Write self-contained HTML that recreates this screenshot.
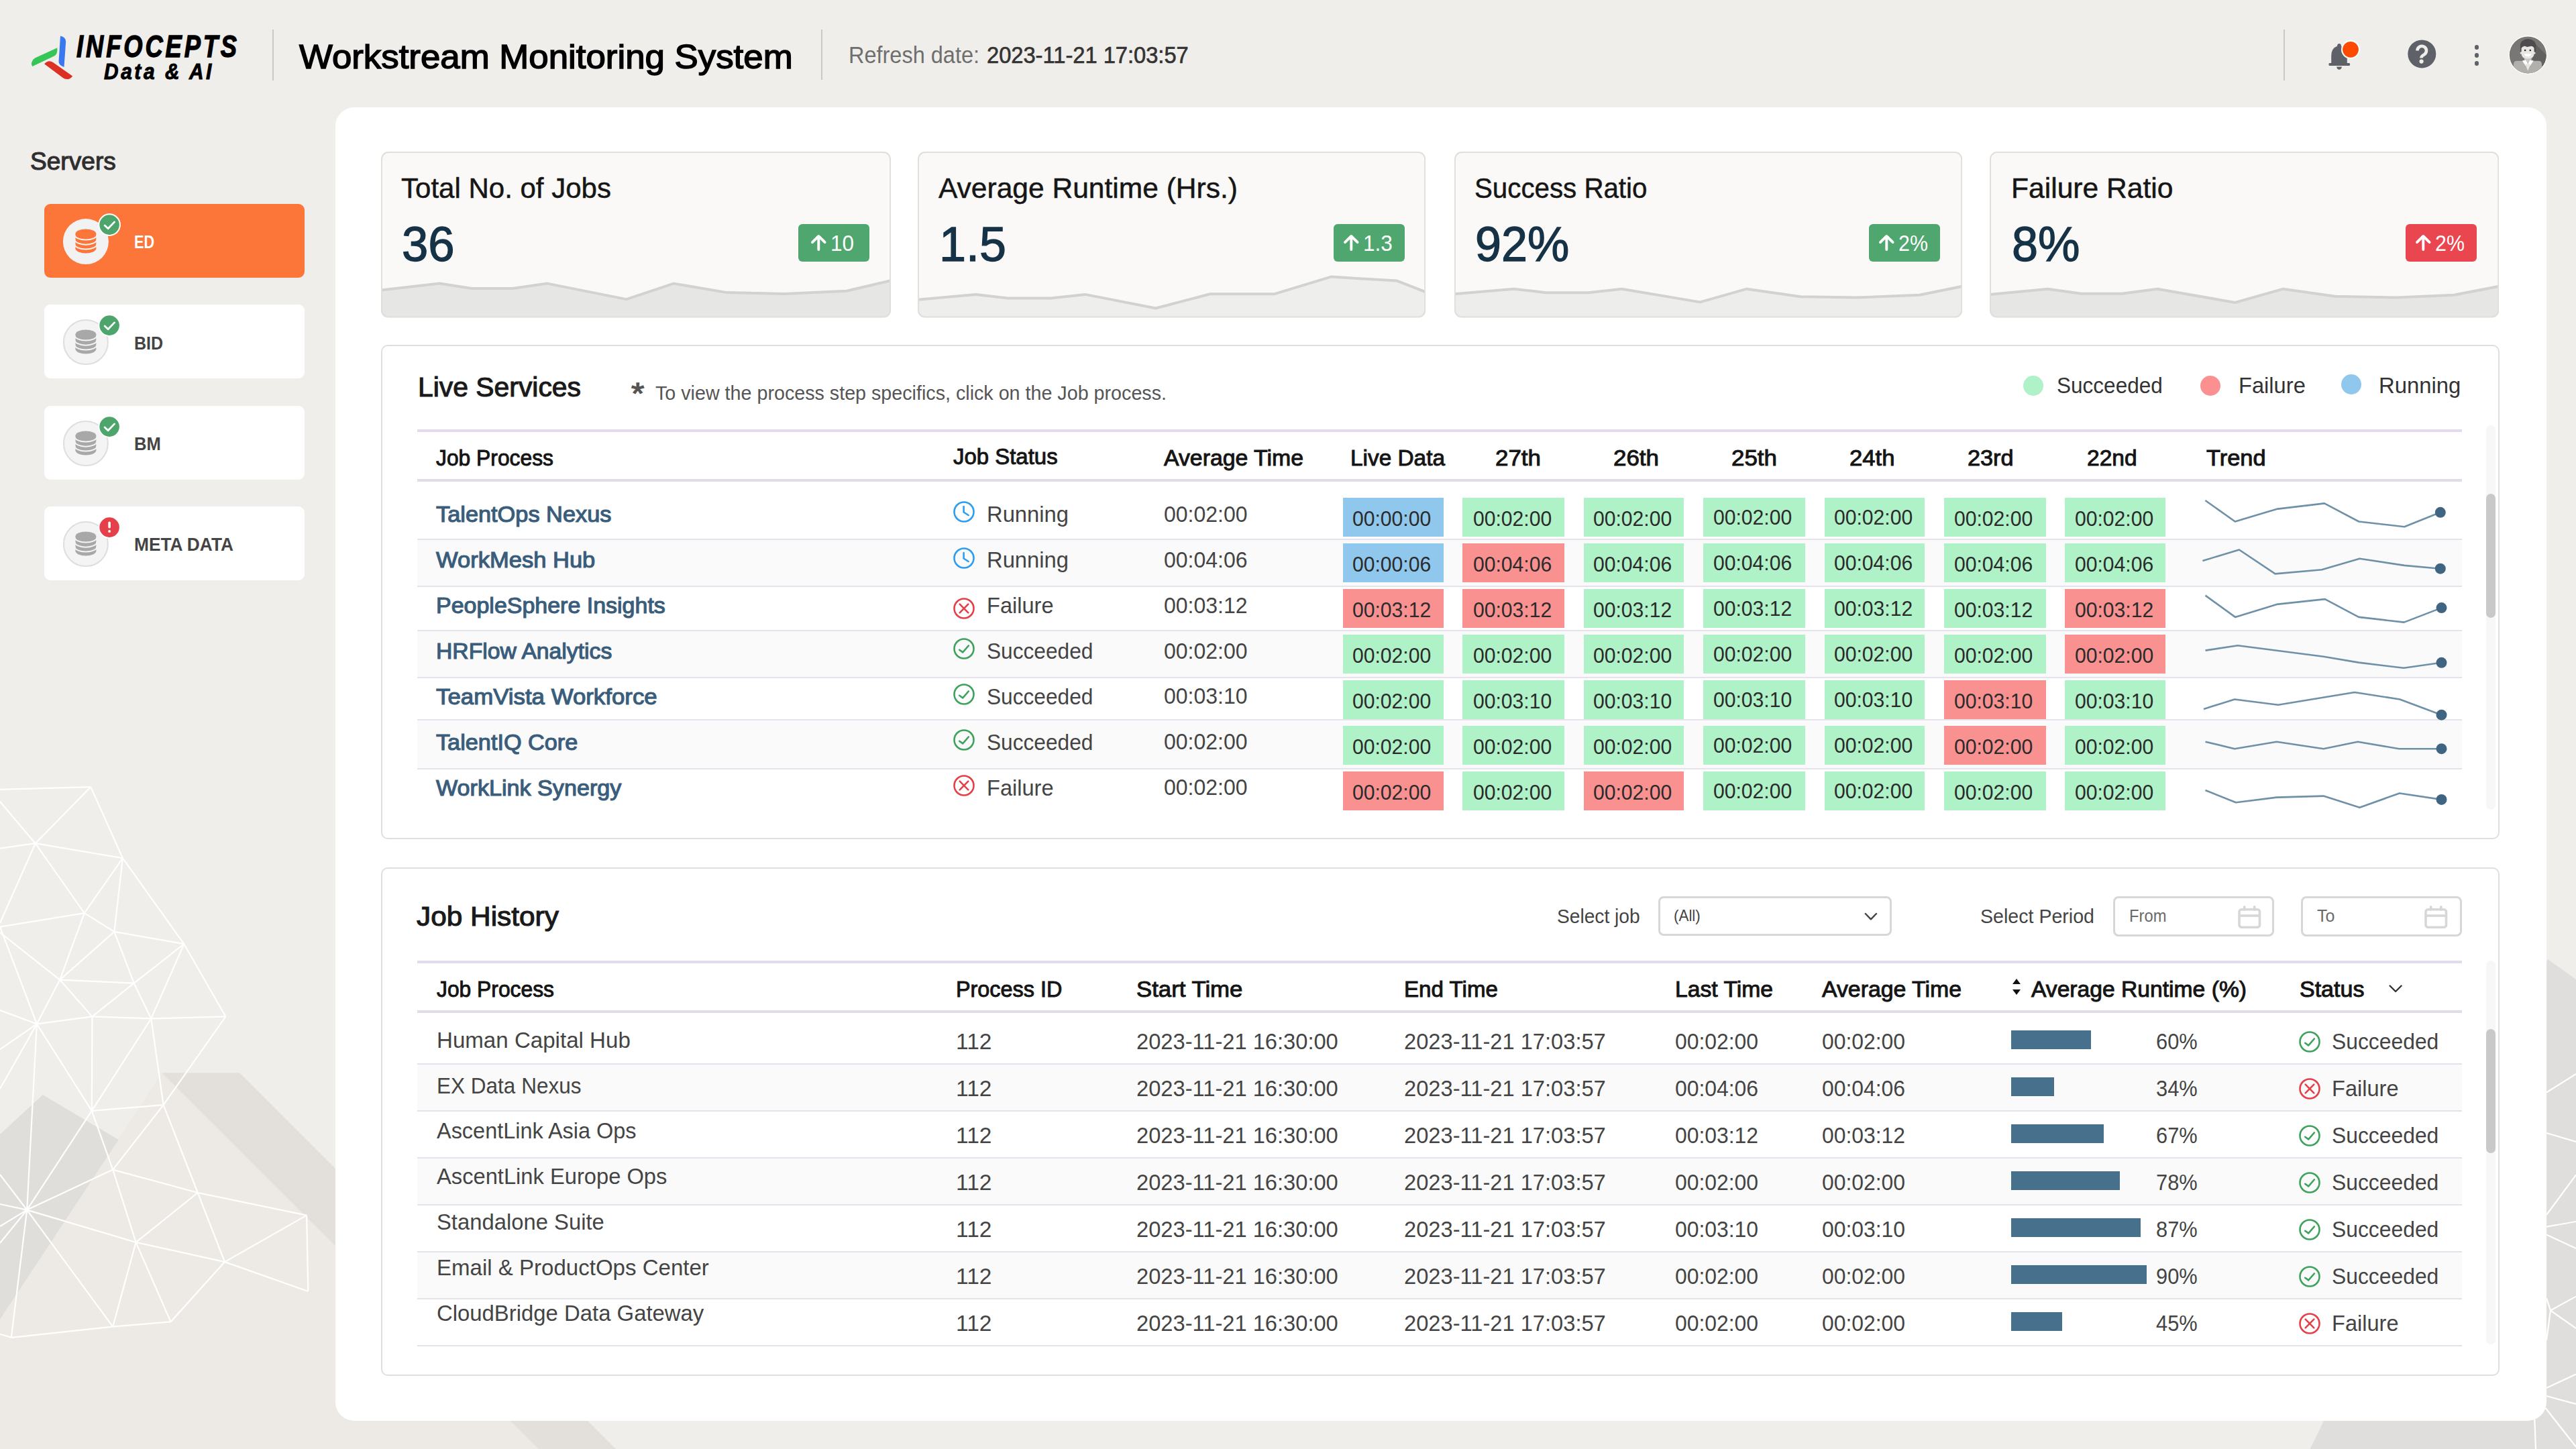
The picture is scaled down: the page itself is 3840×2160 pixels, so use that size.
<!DOCTYPE html>
<html><head><meta charset="utf-8"><title>Workstream Monitoring System</title>
<style>
html,body{margin:0;padding:0;}
body{width:3840px;height:2160px;position:relative;overflow:hidden;background:#f0eeea;font-family:"Liberation Sans", sans-serif;}
.t{position:absolute;line-height:1;white-space:nowrap;}
</style></head><body>
<svg style="position:absolute;left:0;top:0" width="3840" height="2160"><g><polygon points="241.3,1599.3 0.0,1967.0 0.0,2160.0 802.8,2160.0" fill="#edeae5"/><polygon points="241.3,1599.3 357.4,1599.3 918.0,2160.0 802.8,2160.0" fill="#e3e0dc"/><polygon points="0.0,1691.0 63.7,1632.0 176.7,1699.0 0.0,1966.7" fill="#dfdedb"/><polygon points="3798.0,1430.0 3840.0,1460.0 3840.0,2160.0 3443.6,2160.0" fill="#dfdedc"/></g><g stroke="#ffffff" stroke-width="2.2" fill="none"></g></svg>
<svg style="position:absolute;left:0;top:0" width="3840" height="2160"><g stroke="#ffffff" stroke-width="2.2" fill="none"><line x1="182.9" y1="1279.2" x2="274.3" y2="1407.2"/><line x1="125.8" y1="1361.1" x2="89.2" y2="1460.6"/><line x1="52.7" y1="1257.2" x2="0.0" y2="1376.0"/><line x1="170.4" y1="1388.9" x2="274.3" y2="1407.2"/><line x1="0.0" y1="1176.8" x2="135.3" y2="1173.1"/><line x1="0.0" y1="1195.0" x2="52.7" y2="1257.2"/><line x1="135.3" y1="1173.1" x2="52.7" y2="1257.2"/><line x1="0.0" y1="1264.6" x2="52.7" y2="1257.2"/><line x1="135.3" y1="1173.1" x2="182.9" y2="1279.2"/><line x1="52.7" y1="1257.2" x2="182.9" y2="1279.2"/><line x1="52.7" y1="1257.2" x2="125.8" y2="1361.1"/><line x1="182.9" y1="1279.2" x2="125.8" y2="1361.1"/><line x1="0.0" y1="1381.6" x2="125.8" y2="1361.1"/><line x1="0.0" y1="1390.0" x2="89.2" y2="1460.6"/><line x1="0.0" y1="1381.6" x2="54.9" y2="1526.4"/><line x1="182.9" y1="1279.2" x2="170.4" y2="1388.9"/><line x1="125.8" y1="1361.1" x2="170.4" y2="1388.9"/><line x1="170.4" y1="1388.9" x2="89.2" y2="1460.6"/><line x1="89.2" y1="1460.6" x2="199.7" y2="1465.7"/><line x1="274.3" y1="1407.2" x2="199.7" y2="1465.7"/><line x1="170.4" y1="1388.9" x2="199.7" y2="1465.7"/><line x1="199.7" y1="1465.7" x2="225.3" y2="1518.4"/><line x1="274.3" y1="1407.2" x2="225.3" y2="1518.4"/><line x1="274.3" y1="1407.2" x2="336.4" y2="1515.4"/><line x1="225.3" y1="1518.4" x2="336.4" y2="1515.4"/><line x1="89.2" y1="1460.6" x2="137.5" y2="1515.4"/><line x1="199.7" y1="1465.7" x2="137.5" y2="1515.4"/><line x1="89.2" y1="1460.6" x2="54.9" y2="1526.4"/><line x1="54.9" y1="1526.4" x2="137.5" y2="1515.4"/><line x1="137.5" y1="1515.4" x2="225.3" y2="1518.4"/><line x1="54.9" y1="1526.4" x2="136.8" y2="1655.9"/><line x1="137.5" y1="1515.4" x2="136.8" y2="1655.9"/><line x1="225.3" y1="1518.4" x2="136.8" y2="1655.9"/><line x1="225.3" y1="1518.4" x2="243.6" y2="1647.1"/><line x1="336.4" y1="1515.4" x2="243.6" y2="1647.1"/><line x1="136.8" y1="1655.9" x2="243.6" y2="1647.1"/><line x1="136.8" y1="1655.9" x2="168.2" y2="1743.6"/><line x1="243.6" y1="1647.1" x2="168.2" y2="1743.6"/><line x1="243.6" y1="1647.1" x2="294.8" y2="1778.0"/><line x1="54.9" y1="1526.4" x2="40.2" y2="1803.6"/><line x1="136.8" y1="1655.9" x2="40.2" y2="1803.6"/><line x1="168.2" y1="1743.6" x2="40.2" y2="1803.6"/><line x1="40.2" y1="1803.6" x2="202.6" y2="1851.9"/><line x1="168.2" y1="1743.6" x2="202.6" y2="1851.9"/><line x1="168.2" y1="1743.6" x2="294.8" y2="1778.0"/><line x1="294.8" y1="1778.0" x2="202.6" y2="1851.9"/><line x1="294.8" y1="1778.0" x2="335.0" y2="1881.1"/><line x1="294.8" y1="1778.0" x2="457.1" y2="1811.6"/><line x1="202.6" y1="1851.9" x2="335.0" y2="1881.1"/><line x1="457.1" y1="1811.6" x2="335.0" y2="1881.1"/><line x1="457.1" y1="1811.6" x2="459.3" y2="1925.0"/><line x1="459.3" y1="1925.0" x2="335.0" y2="1881.1"/><line x1="335.0" y1="1881.1" x2="254.5" y2="1970.4"/><line x1="202.6" y1="1851.9" x2="254.5" y2="1970.4"/><line x1="202.6" y1="1851.9" x2="168.2" y2="1977.7"/><line x1="40.2" y1="1803.6" x2="168.2" y2="1977.7"/><line x1="40.2" y1="1803.6" x2="16.8" y2="1993.8"/><line x1="168.2" y1="1977.7" x2="254.5" y2="1970.4"/><line x1="16.8" y1="1993.8" x2="168.2" y2="1977.7"/><line x1="0.0" y1="1988.7" x2="16.8" y2="1993.8"/><line x1="0.0" y1="1506.0" x2="54.9" y2="1526.4"/><line x1="0.0" y1="1564.4" x2="54.9" y2="1526.4"/><line x1="0.0" y1="1623.0" x2="54.9" y2="1526.4"/><line x1="0.0" y1="1751.0" x2="40.2" y2="1803.6"/><line x1="0.0" y1="1795.0" x2="40.2" y2="1803.6"/><line x1="0.0" y1="1828.0" x2="40.2" y2="1803.6"/><line x1="0.0" y1="1853.0" x2="40.2" y2="1803.6"/><line x1="3796.0" y1="1628.5" x2="3840.0" y2="1601.0"/><line x1="3796.0" y1="1689.0" x2="3840.0" y2="1702.0"/><line x1="3796.0" y1="1811.0" x2="3840.0" y2="1751.5"/><line x1="3796.0" y1="1828.7" x2="3840.0" y2="1821.0"/><line x1="3796.0" y1="1840.5" x2="3840.0" y2="1861.0"/><line x1="3796.0" y1="1935.0" x2="3802.0" y2="1953.5"/><line x1="3802.0" y1="1953.5" x2="3840.0" y2="1932.6"/><line x1="3802.0" y1="1953.5" x2="3840.0" y2="1980.0"/><line x1="3802.0" y1="1953.5" x2="3796.0" y2="1998.0"/><line x1="3796.0" y1="2069.0" x2="3840.0" y2="2048.5"/><line x1="3796.0" y1="2081.0" x2="3840.0" y2="2093.0"/><line x1="3794.5" y1="2098.8" x2="3840.0" y2="2156.9"/><line x1="3778.3" y1="2115.9" x2="3780.0" y2="2160.0"/></g></svg>
<svg style="position:absolute;left:40.0px;top:45.0px;" width="80.0" height="80.0" viewBox="0 0 80.0 80.0">
<path transform="translate(-40,-45)" d="M90,53.6 Q98,55.5 98.2,62 L95.5,99.9 Q88,97.5 87.5,92 Z" fill="#3a78f0"/>
<path transform="translate(-40,-45)" d="M85.3,71.2 Q86.5,80 80.9,83.6 L48.3,99.1 Q46,95 47.5,92.5 Q49,88 52.1,86.4 Z" fill="#36c657"/>
<path transform="translate(-40,-45)" d="M66,95.2 Q70,91 74,91.2 Q77.5,91.5 79.8,93.6 L108.2,113.5 Q104,118.5 100.7,117.9 Q96,118 94.1,116.2 Z" fill="#dc3024"/>
</svg>
<div id="logo1" class="t" style="left:113.6px;top:45.6px;font-size:46.5px;color:#000;font-weight:700;transform:scaleX(0.7811);transform-origin:0 0;font-style:italic;letter-spacing:5px;-webkit-text-stroke:1.40px #000;">INFOCEPTS</div>
<div id="logo2" class="t" style="left:155.0px;top:90.1px;font-size:33.0px;color:#000;font-weight:700;transform:scaleX(0.9037);transform-origin:0 0;font-style:italic;letter-spacing:4px;-webkit-text-stroke:0.99px #000;">Data &amp; AI</div>
<div style="position:absolute;left:406.0px;top:43.5px;width:2.0px;height:76.0px;background:#c9c9c7;"></div>
<div id="title" class="t" style="left:445.7px;top:59.6px;font-size:50.0px;color:#000;font-weight:400;transform:scaleX(1.0562);transform-origin:0 0;-webkit-text-stroke:1.50px #000;">Workstream Monitoring System</div>
<div style="position:absolute;left:1224.0px;top:44.0px;width:2.0px;height:75.0px;background:#c9c9c7;"></div>
<div id="refresh1" class="t" style="left:1265.4px;top:64.6px;font-size:34.9px;color:#6e6e6e;font-weight:400;transform:scaleX(0.9309);transform-origin:0 0;">Refresh date:</div>
<div id="refresh2" class="t" style="left:1471.3px;top:64.6px;font-size:34.9px;color:#333;font-weight:400;transform:scaleX(0.9356);transform-origin:0 0;-webkit-text-stroke:0.70px #333;">2023-11-21 17:03:57</div>
<div style="position:absolute;left:3404.0px;top:44.0px;width:2.0px;height:76.0px;background:#c9c9c7;"></div>
<svg style="position:absolute;left:3460.0px;top:55.0px;" width="60.0" height="60.0" viewBox="0 0 60.0 60.0">
<g transform="translate(-3460,-55)" fill="#5f6169">
<path d="M3487,65 Q3490,65 3490,68.8 Q3498.8,72 3498.8,83 L3498.8,94 L3501.8,94 Q3503.2,94 3503.2,96 Q3503.2,98 3501.8,98 L3472.8,98 Q3471.4,98 3471.4,96 Q3471.4,94 3472.8,94 L3475.2,94 L3475.2,83 Q3475.2,72 3484,68.8 Q3484,65 3487,65 Z"/>
<path d="M3483,99.5 L3491,99.5 Q3490,103.8 3487,103.8 Q3484,103.8 3483,99.5 Z"/>
</g>
<circle cx="44" cy="18.8" r="14" fill="#ffffff"/>
<circle cx="44" cy="18.8" r="11.9" fill="#fe4a00"/>
</svg>
<svg style="position:absolute;left:3585.0px;top:55.0px;" width="50.0" height="50.0" viewBox="0 0 50.0 50.0">
<circle cx="25.3" cy="25.4" r="21" fill="#5f6169"/>
<path d="M18.5,20.6 A6.75,6.75 0 1 1 29.2,26 Q24.4,28.6 24.4,31.4" stroke="#f0eeea" stroke-width="4.6" fill="none" stroke-linecap="butt"/>
<circle cx="24.6" cy="36.6" r="3.1" fill="#f0eeea"/>
</svg>
<div style="position:absolute;left:3688.6px;top:66.9px;width:6.8px;height:6.8px;background:#5f6169;border-radius:50%;"></div>
<div style="position:absolute;left:3688.6px;top:79.0px;width:6.8px;height:6.8px;background:#5f6169;border-radius:50%;"></div>
<div style="position:absolute;left:3688.6px;top:91.1px;width:6.8px;height:6.8px;background:#5f6169;border-radius:50%;"></div>
<svg style="position:absolute;left:3738.0px;top:52.0px;" width="62.0" height="62.0" viewBox="0 0 62.0 62.0">
<defs><clipPath id="avc"><circle cx="30.3" cy="29.9" r="27.5"/></clipPath></defs>
<circle cx="30.3" cy="29.9" r="28.8" fill="#ffffff"/>
<g clip-path="url(#avc)">
<rect x="0" y="0" width="62" height="62" fill="#787775"/>
<path d="M37,9 L62,34 L62,62 L37,62 Z" fill="#62615f"/>
<path d="M9,62 L9,44 Q9,38.8 14,38.8 L46,38.8 Q51,38.8 51,44 L51,62 Z" fill="#b1b0ad"/>
<rect x="25" y="34" width="10.5" height="7" fill="#c8c7c5"/>
<path d="M21.9,38.4 L27.2,37.4 L30.3,43.2 L26.8,46 Z M38.7,38.4 L33.4,37.4 L30.3,43.2 L33.8,46 Z" fill="#ffffff"/>
<path d="M26.4,43.5 L34.2,43.5 L30.2,53.8 Z" fill="#e8e6e3"/>
<ellipse cx="30.5" cy="15.8" rx="11.6" ry="9.8" fill="#4d4d4d"/>
<rect x="18.9" y="15" width="4" height="10" fill="#4d4d4d"/><rect x="38.2" y="15" width="4" height="10" fill="#4d4d4d"/>
<path d="M20.6,20 Q22,17 26,16.8 L29,18 L35.5,16.8 Q39.2,17.5 39.6,20.5 L39.6,28 Q39.6,35.5 30.1,35.5 Q20.6,35.5 20.6,28 Z" fill="#e8e6e3"/>
<circle cx="20.2" cy="27" r="1.6" fill="#e8e6e3"/><circle cx="40" cy="27" r="1.6" fill="#e8e6e3"/>
<circle cx="26.1" cy="23" r="1.3" fill="#222"/><circle cx="33.8" cy="23" r="1.3" fill="#222"/>
<path d="M24.8,28.3 L35.2,28.3 Q34.5,32.3 30,32.3 Q25.5,32.3 24.8,28.3 Z" fill="#ffffff"/>
</g>
</svg>
<div id="servers" class="t" style="left:44.7px;top:222.2px;font-size:37.5px;color:#2f2f2f;font-weight:400;transform:scaleX(0.9891);transform-origin:0 0;-webkit-text-stroke:1.12px #2f2f2f;">Servers</div>
<div style="position:absolute;left:66.0px;top:303.7px;width:388.0px;height:110.0px;background:#fc763a;border-radius:9px;"></div>
<svg style="position:absolute;left:66.0px;top:303.7px;" width="150.0" height="110.0" viewBox="0 0 150.0 110.0"><circle cx="61.9" cy="56.1" r="34" fill="#f2f2f3"/><ellipse cx="61.9" cy="66.3" rx="15.4" ry="7.2" fill="#fc763a"/><rect x="46.5" y="44.6" width="30.8" height="21.7" fill="#fc763a"/><path d="M45.5,45.9 A16.4,7.6 0 0 0 78.3,45.9" stroke="#f2f2f3" stroke-width="1.9" fill="none"/><path d="M45.5,53.1 A16.4,7.6 0 0 0 78.3,53.1" stroke="#f2f2f3" stroke-width="1.9" fill="none"/><path d="M45.5,59.9 A16.4,7.6 0 0 0 78.3,59.9" stroke="#f2f2f3" stroke-width="1.9" fill="none"/><ellipse cx="61.9" cy="44.6" rx="15.4" ry="7.2" fill="#fc763a"/><circle cx="97.1" cy="31.1" r="16.8" fill="#ffffff"/><circle cx="97.1" cy="31.1" r="14.8" fill="#4ea56c"/><path d="M90.1,31.9 L95.1,36.7 L104.6,26.9" stroke="#fff" stroke-width="2.8" fill="none" stroke-linecap="round" stroke-linejoin="round"/></svg>
<div id="srv_ED" class="t" style="left:199.5px;top:348.3px;font-size:27.0px;color:#ffffff;font-weight:700;transform:scaleX(0.8050);transform-origin:0 0;">ED</div>
<div style="position:absolute;left:66.0px;top:454.4px;width:388.0px;height:110.0px;background:#ffffff;border-radius:9px;"></div>
<svg style="position:absolute;left:66.0px;top:454.4px;" width="150.0" height="110.0" viewBox="0 0 150.0 110.0"><circle cx="61.9" cy="56.1" r="33" fill="#f4f4f4" stroke="#dedede" stroke-width="2"/><ellipse cx="61.9" cy="66.3" rx="15.4" ry="7.2" fill="#a8a8a8"/><rect x="46.5" y="44.6" width="30.8" height="21.7" fill="#a8a8a8"/><path d="M45.5,45.9 A16.4,7.6 0 0 0 78.3,45.9" stroke="#f4f4f4" stroke-width="1.9" fill="none"/><path d="M45.5,53.1 A16.4,7.6 0 0 0 78.3,53.1" stroke="#f4f4f4" stroke-width="1.9" fill="none"/><path d="M45.5,59.9 A16.4,7.6 0 0 0 78.3,59.9" stroke="#f4f4f4" stroke-width="1.9" fill="none"/><ellipse cx="61.9" cy="44.6" rx="15.4" ry="7.2" fill="#a8a8a8"/><circle cx="97.1" cy="31.1" r="16.8" fill="#ffffff"/><circle cx="97.1" cy="31.1" r="14.8" fill="#4ea56c"/><path d="M90.1,31.9 L95.1,36.7 L104.6,26.9" stroke="#fff" stroke-width="2.8" fill="none" stroke-linecap="round" stroke-linejoin="round"/></svg>
<div id="srv_BID" class="t" style="left:199.5px;top:499.0px;font-size:27.0px;color:#444;font-weight:700;transform:scaleX(0.9290);transform-origin:0 0;">BID</div>
<div style="position:absolute;left:66.0px;top:604.5px;width:388.0px;height:110.0px;background:#ffffff;border-radius:9px;"></div>
<svg style="position:absolute;left:66.0px;top:604.5px;" width="150.0" height="110.0" viewBox="0 0 150.0 110.0"><circle cx="61.9" cy="56.1" r="33" fill="#f4f4f4" stroke="#dedede" stroke-width="2"/><ellipse cx="61.9" cy="66.3" rx="15.4" ry="7.2" fill="#a8a8a8"/><rect x="46.5" y="44.6" width="30.8" height="21.7" fill="#a8a8a8"/><path d="M45.5,45.9 A16.4,7.6 0 0 0 78.3,45.9" stroke="#f4f4f4" stroke-width="1.9" fill="none"/><path d="M45.5,53.1 A16.4,7.6 0 0 0 78.3,53.1" stroke="#f4f4f4" stroke-width="1.9" fill="none"/><path d="M45.5,59.9 A16.4,7.6 0 0 0 78.3,59.9" stroke="#f4f4f4" stroke-width="1.9" fill="none"/><ellipse cx="61.9" cy="44.6" rx="15.4" ry="7.2" fill="#a8a8a8"/><circle cx="97.1" cy="31.1" r="16.8" fill="#ffffff"/><circle cx="97.1" cy="31.1" r="14.8" fill="#4ea56c"/><path d="M90.1,31.9 L95.1,36.7 L104.6,26.9" stroke="#fff" stroke-width="2.8" fill="none" stroke-linecap="round" stroke-linejoin="round"/></svg>
<div id="srv_BM" class="t" style="left:199.5px;top:649.1px;font-size:27.0px;color:#444;font-weight:700;transform:scaleX(0.9476);transform-origin:0 0;">BM</div>
<div style="position:absolute;left:66.0px;top:754.7px;width:388.0px;height:110.0px;background:#ffffff;border-radius:9px;"></div>
<svg style="position:absolute;left:66.0px;top:754.7px;" width="150.0" height="110.0" viewBox="0 0 150.0 110.0"><circle cx="61.9" cy="56.1" r="33" fill="#f4f4f4" stroke="#dedede" stroke-width="2"/><ellipse cx="61.9" cy="66.3" rx="15.4" ry="7.2" fill="#a8a8a8"/><rect x="46.5" y="44.6" width="30.8" height="21.7" fill="#a8a8a8"/><path d="M45.5,45.9 A16.4,7.6 0 0 0 78.3,45.9" stroke="#f4f4f4" stroke-width="1.9" fill="none"/><path d="M45.5,53.1 A16.4,7.6 0 0 0 78.3,53.1" stroke="#f4f4f4" stroke-width="1.9" fill="none"/><path d="M45.5,59.9 A16.4,7.6 0 0 0 78.3,59.9" stroke="#f4f4f4" stroke-width="1.9" fill="none"/><ellipse cx="61.9" cy="44.6" rx="15.4" ry="7.2" fill="#a8a8a8"/><circle cx="97.1" cy="31.1" r="16.8" fill="#ffffff"/><circle cx="97.1" cy="31.1" r="14.8" fill="#e5404a"/><rect x="95.3" y="22.6" width="3.6" height="10" rx="1.8" fill="#fff"/><circle cx="97.1" cy="37.1" r="2" fill="#fff"/></svg>
<div id="srv_META_DATA" class="t" style="left:199.5px;top:799.3px;font-size:27.0px;color:#444;font-weight:700;transform:scaleX(0.9739);transform-origin:0 0;">META DATA</div>
<div style="position:absolute;left:500.4px;top:159.6px;width:3295.5px;height:1958.3px;background:#ffffff;border-radius:28px;"></div>
<svg style="position:absolute;left:567.8px;top:226.3px;" width="760.0" height="247.5" viewBox="0 0 760.0 247.5"><defs><clipPath id="kc0"><rect x="0" y="0" width="760.0" height="247.5" rx="10"/></clipPath></defs><rect x="1" y="1" width="758.0" height="245.5" rx="10" fill="#faf9f7"/><g clip-path="url(#kc0)"><polygon points="0.0,206.6 87.2,196.6 135.2,204.1 196.2,204.1 247.9,196.6 365.8,220.1 436.2,196.6 515.8,210.1 601.2,211.9 694.2,207.7 760.0,192.3 760.0,247.5 0.0,247.5" fill="#e6e6e5"/><polyline points="0.0,206.6 87.2,196.6 135.2,204.1 196.2,204.1 247.9,196.6 365.8,220.1 436.2,196.6 515.8,210.1 601.2,211.9 694.2,207.7 760.0,192.3" fill="none" stroke="#d2d2d1" stroke-width="4" stroke-linejoin="round"/></g><rect x="1" y="1" width="758.0" height="245.5" rx="10" fill="none" stroke="#e2dfdb" stroke-width="2"/></svg>
<div id="kt0" class="t" style="left:598.3px;top:260.4px;font-size:42.4px;color:#161616;font-weight:400;transform:scaleX(0.9913);transform-origin:0 0;-webkit-text-stroke:0.51px #161616;">Total No. of Jobs</div>
<div id="kv0" class="t" style="left:598.8px;top:328.0px;font-size:72.8px;color:#163246;font-weight:400;transform:scaleX(0.9706);transform-origin:0 0;-webkit-text-stroke:1.31px #163246;">36</div>
<div style="position:absolute;left:1190.0px;top:334.2px;width:105.7px;height:55.5px;background:#4fa66f;border-radius:6px;"></div>
<svg style="position:absolute;left:1208.0px;top:348.0px;" width="26.0" height="30.0" viewBox="0 0 26.0 30.0"><path d="M12.3,24 L12.3,4.2 M3,13.2 L12.3,4 L21.6,13.2" stroke="#fff" stroke-width="3.9" fill="none" stroke-linecap="round" stroke-linejoin="round"/></svg>
<div id="kb0" class="t" style="left:1238.0px;top:345.6px;font-size:33.4px;color:#ffffff;font-weight:400;transform:scaleX(0.9424);transform-origin:0 0;">10</div>
<svg style="position:absolute;left:1367.7px;top:226.3px;" width="757.2" height="247.5" viewBox="0 0 757.2 247.5"><defs><clipPath id="kc1"><rect x="0" y="0" width="757.2" height="247.5" rx="10"/></clipPath></defs><rect x="1" y="1" width="755.2" height="245.5" rx="10" fill="#faf9f7"/><g clip-path="url(#kc1)"><polygon points="0.0,220.7 86.2,212.9 134.6,218.4 198.2,218.4 249.7,212.9 354.8,233.5 435.9,212.3 531.3,212.3 616.1,186.6 714.5,192.6 757.2,209.3 757.2,247.5 0.0,247.5" fill="#eeeeed"/><polyline points="0.0,220.7 86.2,212.9 134.6,218.4 198.2,218.4 249.7,212.9 354.8,233.5 435.9,212.3 531.3,212.3 616.1,186.6 714.5,192.6 757.2,209.3" fill="none" stroke="#d2d2d1" stroke-width="4" stroke-linejoin="round"/></g><rect x="1" y="1" width="755.2" height="245.5" rx="10" fill="none" stroke="#e2dfdb" stroke-width="2"/></svg>
<div id="kt1" class="t" style="left:1399.2px;top:260.4px;font-size:42.4px;color:#161616;font-weight:400;transform:scaleX(1.0034);transform-origin:0 0;-webkit-text-stroke:0.51px #161616;">Average Runtime (Hrs.)</div>
<div id="kv1" class="t" style="left:1399.7px;top:328.0px;font-size:72.8px;color:#163246;font-weight:400;transform:scaleX(0.9881);transform-origin:0 0;-webkit-text-stroke:1.31px #163246;">1.5</div>
<div style="position:absolute;left:1988.3px;top:334.2px;width:105.7px;height:55.5px;background:#4fa66f;border-radius:6px;"></div>
<svg style="position:absolute;left:2001.8px;top:348.0px;" width="26.0" height="30.0" viewBox="0 0 26.0 30.0"><path d="M12.3,24 L12.3,4.2 M3,13.2 L12.3,4 L21.6,13.2" stroke="#fff" stroke-width="3.9" fill="none" stroke-linecap="round" stroke-linejoin="round"/></svg>
<div id="kb1" class="t" style="left:2031.8px;top:345.6px;font-size:33.4px;color:#ffffff;font-weight:400;transform:scaleX(0.9457);transform-origin:0 0;">1.3</div>
<svg style="position:absolute;left:2167.7px;top:226.3px;" width="757.2" height="247.5" viewBox="0 0 757.2 247.5"><defs><clipPath id="kc2"><rect x="0" y="0" width="757.2" height="247.5" rx="10"/></clipPath></defs><rect x="1" y="1" width="755.2" height="245.5" rx="10" fill="#faf9f7"/><g clip-path="url(#kc2)"><polygon points="0.0,212.3 88.6,204.7 136.1,210.2 199.7,210.2 249.7,204.7 366.3,224.4 435.9,204.7 516.1,216.3 600.9,217.5 693.3,213.8 757.2,200.8 757.2,247.5 0.0,247.5" fill="#ededec"/><polyline points="0.0,212.3 88.6,204.7 136.1,210.2 199.7,210.2 249.7,204.7 366.3,224.4 435.9,204.7 516.1,216.3 600.9,217.5 693.3,213.8 757.2,200.8" fill="none" stroke="#d2d2d1" stroke-width="4" stroke-linejoin="round"/></g><rect x="1" y="1" width="755.2" height="245.5" rx="10" fill="none" stroke="#e2dfdb" stroke-width="2"/></svg>
<div id="kt2" class="t" style="left:2198.2px;top:260.4px;font-size:42.4px;color:#161616;font-weight:400;transform:scaleX(0.9500);transform-origin:0 0;-webkit-text-stroke:0.51px #161616;">Success Ratio</div>
<div id="kv2" class="t" style="left:2198.7px;top:328.0px;font-size:72.8px;color:#163246;font-weight:400;transform:scaleX(0.9622);transform-origin:0 0;-webkit-text-stroke:1.31px #163246;">92%</div>
<div style="position:absolute;left:2786.2px;top:334.2px;width:105.7px;height:55.5px;background:#4fa66f;border-radius:6px;"></div>
<svg style="position:absolute;left:2799.8px;top:348.0px;" width="26.0" height="30.0" viewBox="0 0 26.0 30.0"><path d="M12.3,24 L12.3,4.2 M3,13.2 L12.3,4 L21.6,13.2" stroke="#fff" stroke-width="3.9" fill="none" stroke-linecap="round" stroke-linejoin="round"/></svg>
<div id="kb2" class="t" style="left:2829.8px;top:345.6px;font-size:33.4px;color:#ffffff;font-weight:400;transform:scaleX(0.9096);transform-origin:0 0;">2%</div>
<svg style="position:absolute;left:2965.9px;top:226.3px;" width="759.3" height="247.5" viewBox="0 0 759.3 247.5"><defs><clipPath id="kc3"><rect x="0" y="0" width="759.3" height="247.5" rx="10"/></clipPath></defs><rect x="1" y="1" width="757.3" height="245.5" rx="10" fill="#faf9f7"/><g clip-path="url(#kc3)"><polygon points="0.0,212.9 86.5,204.7 136.4,211.7 197.0,211.7 250.0,204.7 365.9,225.0 437.7,204.7 514.9,215.7 607.3,217.5 692.0,213.8 759.3,200.8 759.3,247.5 0.0,247.5" fill="#e6e6e5"/><polyline points="0.0,212.9 86.5,204.7 136.4,211.7 197.0,211.7 250.0,204.7 365.9,225.0 437.7,204.7 514.9,215.7 607.3,217.5 692.0,213.8 759.3,200.8" fill="none" stroke="#d2d2d1" stroke-width="4" stroke-linejoin="round"/></g><rect x="1" y="1" width="757.3" height="245.5" rx="10" fill="none" stroke="#e2dfdb" stroke-width="2"/></svg>
<div id="kt3" class="t" style="left:2998.4px;top:260.4px;font-size:42.4px;color:#161616;font-weight:400;transform:scaleX(1.0049);transform-origin:0 0;-webkit-text-stroke:0.51px #161616;">Failure Ratio</div>
<div id="kv3" class="t" style="left:2998.9px;top:328.0px;font-size:72.8px;color:#163246;font-weight:400;transform:scaleX(0.9647);transform-origin:0 0;-webkit-text-stroke:1.31px #163246;">8%</div>
<div style="position:absolute;left:3586.2px;top:334.2px;width:105.7px;height:55.5px;background:#e9464f;border-radius:6px;"></div>
<svg style="position:absolute;left:3599.8px;top:348.0px;" width="26.0" height="30.0" viewBox="0 0 26.0 30.0"><path d="M12.3,24 L12.3,4.2 M3,13.2 L12.3,4 L21.6,13.2" stroke="#fff" stroke-width="3.9" fill="none" stroke-linecap="round" stroke-linejoin="round"/></svg>
<div id="kb3" class="t" style="left:3629.8px;top:345.6px;font-size:33.4px;color:#ffffff;font-weight:400;transform:scaleX(0.9096);transform-origin:0 0;">2%</div>
<div style="position:absolute;left:568.2px;top:513.9px;width:3158.0px;height:737.1px;background:#ffffff;box-sizing:border-box;border:2px solid #e2dfdb;border-radius:10px;"></div>
<div id="ls_title" class="t" style="left:623.2px;top:558.2px;font-size:39.8px;color:#1a1a1a;font-weight:400;transform:scaleX(1.0267);transform-origin:0 0;-webkit-text-stroke:1.11px #1a1a1a;">Live Services</div>
<div id="ls_ast" class="t" style="left:941.0px;top:564.7px;font-size:44.0px;color:#555;font-weight:400;transform:scaleX(1.1328);transform-origin:0 0;-webkit-text-stroke:1.32px #555;">*</div>
<div id="ls_note" class="t" style="left:976.8px;top:571.6px;font-size:29.0px;color:#555;font-weight:400;transform:scaleX(0.9890);transform-origin:0 0;">To view the process step specifics, click on the Job process.</div>
<div style="position:absolute;left:3016.0px;top:560.2px;width:30.0px;height:30.0px;background:#b0f2c8;border-radius:50%;"></div>
<div id="lg_Succeeded" class="t" style="left:3066.0px;top:557.1px;font-size:34.0px;color:#333;font-weight:400;transform:scaleX(0.9275);transform-origin:0 0;">Succeeded</div>
<div style="position:absolute;left:3279.7px;top:560.2px;width:30.0px;height:30.0px;background:#fa9090;border-radius:50%;"></div>
<div id="lg_Failure" class="t" style="left:3336.5px;top:557.1px;font-size:34.0px;color:#333;font-weight:400;transform:scaleX(0.9602);transform-origin:0 0;">Failure</div>
<div style="position:absolute;left:3489.6px;top:558.2px;width:30.0px;height:30.0px;background:#8fc8ec;border-radius:50%;"></div>
<div id="lg_Running" class="t" style="left:3546.0px;top:557.1px;font-size:34.0px;color:#333;font-weight:400;transform:scaleX(0.9664);transform-origin:0 0;">Running</div>
<div style="position:absolute;left:621.7px;top:639.8px;width:3048.0px;height:3.9px;background:#e2dcea;"></div>
<div style="position:absolute;left:621.7px;top:713.8px;width:3048.0px;height:4.0px;background:#e2dcea;"></div>
<div id="lsh0" class="t" style="left:650.0px;top:665.9px;font-size:33.5px;color:#151515;font-weight:400;transform:scaleX(0.9493);transform-origin:0 0;-webkit-text-stroke:1.00px #151515;">Job Process</div>
<div id="lsh1" class="t" style="left:1421.4px;top:663.9px;font-size:33.5px;color:#151515;font-weight:400;transform:scaleX(0.9830);transform-origin:0 0;-webkit-text-stroke:1.00px #151515;">Job Status</div>
<div id="lsh2" class="t" style="left:1734.9px;top:665.9px;font-size:33.5px;color:#151515;font-weight:400;transform:scaleX(1.0093);transform-origin:0 0;-webkit-text-stroke:1.00px #151515;">Average Time</div>
<div id="lsh3" class="t" style="left:2012.9px;top:665.9px;font-size:33.5px;color:#151515;font-weight:400;transform:scaleX(0.9962);transform-origin:0 0;-webkit-text-stroke:1.00px #151515;">Live Data</div>
<div id="lsh4" class="t" style="left:2228.7px;top:665.9px;font-size:33.5px;color:#151515;font-weight:400;transform:scaleX(1.0429);transform-origin:0 0;-webkit-text-stroke:1.00px #151515;">27th</div>
<div id="lsh5" class="t" style="left:2404.6px;top:665.9px;font-size:33.5px;color:#151515;font-weight:400;transform:scaleX(1.0429);transform-origin:0 0;-webkit-text-stroke:1.00px #151515;">26th</div>
<div id="lsh6" class="t" style="left:2580.5px;top:665.9px;font-size:33.5px;color:#151515;font-weight:400;transform:scaleX(1.0429);transform-origin:0 0;-webkit-text-stroke:1.00px #151515;">25th</div>
<div id="lsh7" class="t" style="left:2756.5px;top:665.9px;font-size:33.5px;color:#151515;font-weight:400;transform:scaleX(1.0352);transform-origin:0 0;-webkit-text-stroke:1.00px #151515;">24th</div>
<div id="lsh8" class="t" style="left:2933.4px;top:665.9px;font-size:33.5px;color:#151515;font-weight:400;transform:scaleX(1.0229);transform-origin:0 0;-webkit-text-stroke:1.00px #151515;">23rd</div>
<div id="lsh9" class="t" style="left:3111.0px;top:665.9px;font-size:33.5px;color:#151515;font-weight:400;transform:scaleX(1.0023);transform-origin:0 0;-webkit-text-stroke:1.00px #151515;">22nd</div>
<div id="lsh10" class="t" style="left:3289.4px;top:665.9px;font-size:33.5px;color:#151515;font-weight:400;transform:scaleX(1.0269);transform-origin:0 0;-webkit-text-stroke:1.00px #151515;">Trend</div>
<div style="position:absolute;left:621.7px;top:804.5px;width:3048.0px;height:69.0px;background:#fafafa;"></div>
<div style="position:absolute;left:621.7px;top:941.0px;width:3048.0px;height:69.0px;background:#fafafa;"></div>
<div style="position:absolute;left:621.7px;top:1074.4px;width:3048.0px;height:71.4px;background:#fafafa;"></div>
<div style="position:absolute;left:621.7px;top:802.5px;width:3048.0px;height:2.0px;background:#e6e2ec;"></div>
<div style="position:absolute;left:621.7px;top:872.5px;width:3048.0px;height:2.0px;background:#e6e2ec;"></div>
<div style="position:absolute;left:621.7px;top:939.0px;width:3048.0px;height:2.0px;background:#e6e2ec;"></div>
<div style="position:absolute;left:621.7px;top:1009.0px;width:3048.0px;height:2.0px;background:#e6e2ec;"></div>
<div style="position:absolute;left:621.7px;top:1072.4px;width:3048.0px;height:2.0px;background:#e6e2ec;"></div>
<div style="position:absolute;left:621.7px;top:1144.8px;width:3048.0px;height:2.0px;background:#e6e2ec;"></div>
<div id="lsn0" class="t" style="left:650.4px;top:749.8px;font-size:33.9px;color:#3a5d7b;font-weight:400;transform:scaleX(1.0129);transform-origin:0 0;-webkit-text-stroke:1.19px #3a5d7b;">TalentOps Nexus</div>
<svg style="position:absolute;left:1418.9px;top:744.8px;" width="36.0" height="36.0" viewBox="0 0 36.0 36.0"><circle cx="18" cy="18" r="14.5" fill="none" stroke="#2e9df0" stroke-width="2.6"/><path d="M17.6,10 L17.6,18.5 L24.6,23" stroke="#2e9df0" stroke-width="2.6" fill="none" stroke-linecap="round" stroke-linejoin="round"/></svg>
<div id="lss0" class="t" style="left:1470.8px;top:750.1px;font-size:33.5px;color:#444;font-weight:400;transform:scaleX(0.9776);transform-origin:0 0;">Running</div>
<div id="lsa0" class="t" style="left:1734.9px;top:749.6px;font-size:33.5px;color:#444;font-weight:400;transform:scaleX(0.9547);transform-origin:0 0;">00:02:00</div>
<div style="position:absolute;left:2002.0px;top:742.2px;width:149.7px;height:57.6px;background:#8fc8ec;"></div>
<div id="lsc0_0" class="t" style="left:2016.3px;top:757.2px;font-size:32.2px;color:#2b2b2b;font-weight:400;transform:scaleX(0.9354);transform-origin:0 0;">00:00:00</div>
<div style="position:absolute;left:2180.2px;top:742.2px;width:152.0px;height:57.6px;background:#aff2c7;"></div>
<div id="lsc0_1" class="t" style="left:2195.7px;top:757.2px;font-size:32.2px;color:#2b2b2b;font-weight:400;transform:scaleX(0.9354);transform-origin:0 0;">00:02:00</div>
<div style="position:absolute;left:2360.5px;top:742.2px;width:149.7px;height:57.6px;background:#aff2c7;"></div>
<div id="lsc0_2" class="t" style="left:2374.8px;top:757.2px;font-size:32.2px;color:#2b2b2b;font-weight:400;transform:scaleX(0.9354);transform-origin:0 0;">00:02:00</div>
<div style="position:absolute;left:2539.2px;top:742.2px;width:151.5px;height:57.6px;background:#aff2c7;"></div>
<div id="lsc0_3" class="t" style="left:2554.4px;top:755.0px;font-size:32.2px;color:#2b2b2b;font-weight:400;transform:scaleX(0.9354);transform-origin:0 0;">00:02:00</div>
<div style="position:absolute;left:2719.5px;top:742.2px;width:149.7px;height:57.6px;background:#aff2c7;"></div>
<div id="lsc0_4" class="t" style="left:2733.8px;top:755.0px;font-size:32.2px;color:#2b2b2b;font-weight:400;transform:scaleX(0.9354);transform-origin:0 0;">00:02:00</div>
<div style="position:absolute;left:2898.0px;top:742.2px;width:151.7px;height:57.6px;background:#aff2c7;"></div>
<div id="lsc0_5" class="t" style="left:2913.3px;top:757.2px;font-size:32.2px;color:#2b2b2b;font-weight:400;transform:scaleX(0.9354);transform-origin:0 0;">00:02:00</div>
<div style="position:absolute;left:3078.2px;top:742.2px;width:150.0px;height:57.6px;background:#aff2c7;"></div>
<div id="lsc0_6" class="t" style="left:3092.7px;top:757.2px;font-size:32.2px;color:#2b2b2b;font-weight:400;transform:scaleX(0.9354);transform-origin:0 0;">00:02:00</div>
<div id="lsn1" class="t" style="left:650.4px;top:817.7px;font-size:33.9px;color:#3a5d7b;font-weight:400;transform:scaleX(1.0188);transform-origin:0 0;-webkit-text-stroke:1.19px #3a5d7b;">WorkMesh Hub</div>
<svg style="position:absolute;left:1418.9px;top:813.6px;" width="36.0" height="36.0" viewBox="0 0 36.0 36.0"><circle cx="18" cy="18" r="14.5" fill="none" stroke="#2e9df0" stroke-width="2.6"/><path d="M17.6,10 L17.6,18.5 L24.6,23" stroke="#2e9df0" stroke-width="2.6" fill="none" stroke-linecap="round" stroke-linejoin="round"/></svg>
<div id="lss1" class="t" style="left:1470.8px;top:818.1px;font-size:33.5px;color:#444;font-weight:400;transform:scaleX(0.9776);transform-origin:0 0;">Running</div>
<div id="lsa1" class="t" style="left:1734.9px;top:817.6px;font-size:33.5px;color:#444;font-weight:400;transform:scaleX(0.9547);transform-origin:0 0;">00:04:06</div>
<div style="position:absolute;left:2002.0px;top:810.2px;width:149.7px;height:57.6px;background:#8fc8ec;"></div>
<div id="lsc1_0" class="t" style="left:2016.3px;top:825.2px;font-size:32.2px;color:#2b2b2b;font-weight:400;transform:scaleX(0.9354);transform-origin:0 0;">00:00:06</div>
<div style="position:absolute;left:2180.2px;top:810.2px;width:152.0px;height:57.6px;background:#fa9191;"></div>
<div id="lsc1_1" class="t" style="left:2195.7px;top:825.2px;font-size:32.2px;color:#2b2b2b;font-weight:400;transform:scaleX(0.9354);transform-origin:0 0;">00:04:06</div>
<div style="position:absolute;left:2360.5px;top:810.2px;width:149.7px;height:57.6px;background:#aff2c7;"></div>
<div id="lsc1_2" class="t" style="left:2374.8px;top:825.2px;font-size:32.2px;color:#2b2b2b;font-weight:400;transform:scaleX(0.9354);transform-origin:0 0;">00:04:06</div>
<div style="position:absolute;left:2539.2px;top:810.2px;width:151.5px;height:57.6px;background:#aff2c7;"></div>
<div id="lsc1_3" class="t" style="left:2554.4px;top:823.0px;font-size:32.2px;color:#2b2b2b;font-weight:400;transform:scaleX(0.9354);transform-origin:0 0;">00:04:06</div>
<div style="position:absolute;left:2719.5px;top:810.2px;width:149.7px;height:57.6px;background:#aff2c7;"></div>
<div id="lsc1_4" class="t" style="left:2733.8px;top:823.0px;font-size:32.2px;color:#2b2b2b;font-weight:400;transform:scaleX(0.9354);transform-origin:0 0;">00:04:06</div>
<div style="position:absolute;left:2898.0px;top:810.2px;width:151.7px;height:57.6px;background:#aff2c7;"></div>
<div id="lsc1_5" class="t" style="left:2913.3px;top:825.2px;font-size:32.2px;color:#2b2b2b;font-weight:400;transform:scaleX(0.9354);transform-origin:0 0;">00:04:06</div>
<div style="position:absolute;left:3078.2px;top:810.2px;width:150.0px;height:57.6px;background:#aff2c7;"></div>
<div id="lsc1_6" class="t" style="left:3092.7px;top:825.2px;font-size:32.2px;color:#2b2b2b;font-weight:400;transform:scaleX(0.9354);transform-origin:0 0;">00:04:06</div>
<div id="lsn2" class="t" style="left:650.4px;top:885.7px;font-size:33.9px;color:#3a5d7b;font-weight:400;transform:scaleX(1.0023);transform-origin:0 0;-webkit-text-stroke:1.19px #3a5d7b;">PeopleSphere Insights</div>
<svg style="position:absolute;left:1418.9px;top:888.7px;" width="36.0" height="36.0" viewBox="0 0 36.0 36.0"><circle cx="18" cy="18" r="14.5" fill="none" stroke="#e5404a" stroke-width="2.6"/><path d="M11.7,11.7 L24.3,24.3 M24.3,11.7 L11.7,24.3" stroke="#e5404a" stroke-width="2.6" fill="none" stroke-linecap="round"/></svg>
<div id="lss2" class="t" style="left:1470.8px;top:886.0px;font-size:33.5px;color:#444;font-weight:400;transform:scaleX(0.9716);transform-origin:0 0;">Failure</div>
<div id="lsa2" class="t" style="left:1734.9px;top:885.5px;font-size:33.5px;color:#444;font-weight:400;transform:scaleX(0.9547);transform-origin:0 0;">00:03:12</div>
<div style="position:absolute;left:2002.0px;top:878.2px;width:149.7px;height:57.6px;background:#fa9191;"></div>
<div id="lsc2_0" class="t" style="left:2016.3px;top:893.2px;font-size:32.2px;color:#2b2b2b;font-weight:400;transform:scaleX(0.9354);transform-origin:0 0;">00:03:12</div>
<div style="position:absolute;left:2180.2px;top:878.2px;width:152.0px;height:57.6px;background:#fa9191;"></div>
<div id="lsc2_1" class="t" style="left:2195.7px;top:893.2px;font-size:32.2px;color:#2b2b2b;font-weight:400;transform:scaleX(0.9354);transform-origin:0 0;">00:03:12</div>
<div style="position:absolute;left:2360.5px;top:878.2px;width:149.7px;height:57.6px;background:#aff2c7;"></div>
<div id="lsc2_2" class="t" style="left:2374.8px;top:893.2px;font-size:32.2px;color:#2b2b2b;font-weight:400;transform:scaleX(0.9354);transform-origin:0 0;">00:03:12</div>
<div style="position:absolute;left:2539.2px;top:878.2px;width:151.5px;height:57.6px;background:#aff2c7;"></div>
<div id="lsc2_3" class="t" style="left:2554.4px;top:891.0px;font-size:32.2px;color:#2b2b2b;font-weight:400;transform:scaleX(0.9354);transform-origin:0 0;">00:03:12</div>
<div style="position:absolute;left:2719.5px;top:878.2px;width:149.7px;height:57.6px;background:#aff2c7;"></div>
<div id="lsc2_4" class="t" style="left:2733.8px;top:891.0px;font-size:32.2px;color:#2b2b2b;font-weight:400;transform:scaleX(0.9354);transform-origin:0 0;">00:03:12</div>
<div style="position:absolute;left:2898.0px;top:878.2px;width:151.7px;height:57.6px;background:#aff2c7;"></div>
<div id="lsc2_5" class="t" style="left:2913.3px;top:893.2px;font-size:32.2px;color:#2b2b2b;font-weight:400;transform:scaleX(0.9354);transform-origin:0 0;">00:03:12</div>
<div style="position:absolute;left:3078.2px;top:878.2px;width:150.0px;height:57.6px;background:#fa9191;"></div>
<div id="lsc2_6" class="t" style="left:3092.7px;top:893.2px;font-size:32.2px;color:#2b2b2b;font-weight:400;transform:scaleX(0.9354);transform-origin:0 0;">00:03:12</div>
<div id="lsn3" class="t" style="left:650.4px;top:953.6px;font-size:33.9px;color:#3a5d7b;font-weight:400;transform:scaleX(0.9948);transform-origin:0 0;-webkit-text-stroke:1.19px #3a5d7b;">HRFlow Analytics</div>
<svg style="position:absolute;left:1418.9px;top:948.9px;" width="36.0" height="36.0" viewBox="0 0 36.0 36.0"><circle cx="18" cy="18" r="14.5" fill="none" stroke="#3ea25d" stroke-width="2.6"/><path d="M11.2,19.8 L16.2,23.4 L24.8,13.5" stroke="#3ea25d" stroke-width="2.6" fill="none" stroke-linecap="round" stroke-linejoin="round"/></svg>
<div id="lss3" class="t" style="left:1470.8px;top:954.0px;font-size:33.5px;color:#444;font-weight:400;transform:scaleX(0.9449);transform-origin:0 0;">Succeeded</div>
<div id="lsa3" class="t" style="left:1734.9px;top:953.5px;font-size:33.5px;color:#444;font-weight:400;transform:scaleX(0.9547);transform-origin:0 0;">00:02:00</div>
<div style="position:absolute;left:2002.0px;top:946.2px;width:149.7px;height:57.6px;background:#aff2c7;"></div>
<div id="lsc3_0" class="t" style="left:2016.3px;top:961.2px;font-size:32.2px;color:#2b2b2b;font-weight:400;transform:scaleX(0.9354);transform-origin:0 0;">00:02:00</div>
<div style="position:absolute;left:2180.2px;top:946.2px;width:152.0px;height:57.6px;background:#aff2c7;"></div>
<div id="lsc3_1" class="t" style="left:2195.7px;top:961.2px;font-size:32.2px;color:#2b2b2b;font-weight:400;transform:scaleX(0.9354);transform-origin:0 0;">00:02:00</div>
<div style="position:absolute;left:2360.5px;top:946.2px;width:149.7px;height:57.6px;background:#aff2c7;"></div>
<div id="lsc3_2" class="t" style="left:2374.8px;top:961.2px;font-size:32.2px;color:#2b2b2b;font-weight:400;transform:scaleX(0.9354);transform-origin:0 0;">00:02:00</div>
<div style="position:absolute;left:2539.2px;top:946.2px;width:151.5px;height:57.6px;background:#aff2c7;"></div>
<div id="lsc3_3" class="t" style="left:2554.4px;top:959.0px;font-size:32.2px;color:#2b2b2b;font-weight:400;transform:scaleX(0.9354);transform-origin:0 0;">00:02:00</div>
<div style="position:absolute;left:2719.5px;top:946.2px;width:149.7px;height:57.6px;background:#aff2c7;"></div>
<div id="lsc3_4" class="t" style="left:2733.8px;top:959.0px;font-size:32.2px;color:#2b2b2b;font-weight:400;transform:scaleX(0.9354);transform-origin:0 0;">00:02:00</div>
<div style="position:absolute;left:2898.0px;top:946.2px;width:151.7px;height:57.6px;background:#aff2c7;"></div>
<div id="lsc3_5" class="t" style="left:2913.3px;top:961.2px;font-size:32.2px;color:#2b2b2b;font-weight:400;transform:scaleX(0.9354);transform-origin:0 0;">00:02:00</div>
<div style="position:absolute;left:3078.2px;top:946.2px;width:150.0px;height:57.6px;background:#fa9191;"></div>
<div id="lsc3_6" class="t" style="left:3092.7px;top:961.2px;font-size:32.2px;color:#2b2b2b;font-weight:400;transform:scaleX(0.9354);transform-origin:0 0;">00:02:00</div>
<div id="lsn4" class="t" style="left:650.4px;top:1021.6px;font-size:33.9px;color:#3a5d7b;font-weight:400;transform:scaleX(1.0277);transform-origin:0 0;-webkit-text-stroke:1.19px #3a5d7b;">TeamVista Workforce</div>
<svg style="position:absolute;left:1418.9px;top:1016.7px;" width="36.0" height="36.0" viewBox="0 0 36.0 36.0"><circle cx="18" cy="18" r="14.5" fill="none" stroke="#3ea25d" stroke-width="2.6"/><path d="M11.2,19.8 L16.2,23.4 L24.8,13.5" stroke="#3ea25d" stroke-width="2.6" fill="none" stroke-linecap="round" stroke-linejoin="round"/></svg>
<div id="lss4" class="t" style="left:1470.8px;top:1021.9px;font-size:33.5px;color:#444;font-weight:400;transform:scaleX(0.9449);transform-origin:0 0;">Succeeded</div>
<div id="lsa4" class="t" style="left:1734.9px;top:1021.4px;font-size:33.5px;color:#444;font-weight:400;transform:scaleX(0.9547);transform-origin:0 0;">00:03:10</div>
<div style="position:absolute;left:2002.0px;top:1014.2px;width:149.7px;height:57.6px;background:#aff2c7;"></div>
<div id="lsc4_0" class="t" style="left:2016.3px;top:1029.2px;font-size:32.2px;color:#2b2b2b;font-weight:400;transform:scaleX(0.9354);transform-origin:0 0;">00:02:00</div>
<div style="position:absolute;left:2180.2px;top:1014.2px;width:152.0px;height:57.6px;background:#aff2c7;"></div>
<div id="lsc4_1" class="t" style="left:2195.7px;top:1029.2px;font-size:32.2px;color:#2b2b2b;font-weight:400;transform:scaleX(0.9354);transform-origin:0 0;">00:03:10</div>
<div style="position:absolute;left:2360.5px;top:1014.2px;width:149.7px;height:57.6px;background:#aff2c7;"></div>
<div id="lsc4_2" class="t" style="left:2374.8px;top:1029.2px;font-size:32.2px;color:#2b2b2b;font-weight:400;transform:scaleX(0.9354);transform-origin:0 0;">00:03:10</div>
<div style="position:absolute;left:2539.2px;top:1014.2px;width:151.5px;height:57.6px;background:#aff2c7;"></div>
<div id="lsc4_3" class="t" style="left:2554.4px;top:1027.0px;font-size:32.2px;color:#2b2b2b;font-weight:400;transform:scaleX(0.9354);transform-origin:0 0;">00:03:10</div>
<div style="position:absolute;left:2719.5px;top:1014.2px;width:149.7px;height:57.6px;background:#aff2c7;"></div>
<div id="lsc4_4" class="t" style="left:2733.8px;top:1027.0px;font-size:32.2px;color:#2b2b2b;font-weight:400;transform:scaleX(0.9354);transform-origin:0 0;">00:03:10</div>
<div style="position:absolute;left:2898.0px;top:1014.2px;width:151.7px;height:57.6px;background:#fa9191;"></div>
<div id="lsc4_5" class="t" style="left:2913.3px;top:1029.2px;font-size:32.2px;color:#2b2b2b;font-weight:400;transform:scaleX(0.9354);transform-origin:0 0;">00:03:10</div>
<div style="position:absolute;left:3078.2px;top:1014.2px;width:150.0px;height:57.6px;background:#aff2c7;"></div>
<div id="lsc4_6" class="t" style="left:3092.7px;top:1029.2px;font-size:32.2px;color:#2b2b2b;font-weight:400;transform:scaleX(0.9354);transform-origin:0 0;">00:03:10</div>
<div id="lsn5" class="t" style="left:650.4px;top:1089.5px;font-size:33.9px;color:#3a5d7b;font-weight:400;transform:scaleX(1.0106);transform-origin:0 0;-webkit-text-stroke:1.19px #3a5d7b;">TalentIQ Core</div>
<svg style="position:absolute;left:1418.9px;top:1085.0px;" width="36.0" height="36.0" viewBox="0 0 36.0 36.0"><circle cx="18" cy="18" r="14.5" fill="none" stroke="#3ea25d" stroke-width="2.6"/><path d="M11.2,19.8 L16.2,23.4 L24.8,13.5" stroke="#3ea25d" stroke-width="2.6" fill="none" stroke-linecap="round" stroke-linejoin="round"/></svg>
<div id="lss5" class="t" style="left:1470.8px;top:1089.9px;font-size:33.5px;color:#444;font-weight:400;transform:scaleX(0.9449);transform-origin:0 0;">Succeeded</div>
<div id="lsa5" class="t" style="left:1734.9px;top:1089.4px;font-size:33.5px;color:#444;font-weight:400;transform:scaleX(0.9547);transform-origin:0 0;">00:02:00</div>
<div style="position:absolute;left:2002.0px;top:1082.2px;width:149.7px;height:57.6px;background:#aff2c7;"></div>
<div id="lsc5_0" class="t" style="left:2016.3px;top:1097.2px;font-size:32.2px;color:#2b2b2b;font-weight:400;transform:scaleX(0.9354);transform-origin:0 0;">00:02:00</div>
<div style="position:absolute;left:2180.2px;top:1082.2px;width:152.0px;height:57.6px;background:#aff2c7;"></div>
<div id="lsc5_1" class="t" style="left:2195.7px;top:1097.2px;font-size:32.2px;color:#2b2b2b;font-weight:400;transform:scaleX(0.9354);transform-origin:0 0;">00:02:00</div>
<div style="position:absolute;left:2360.5px;top:1082.2px;width:149.7px;height:57.6px;background:#aff2c7;"></div>
<div id="lsc5_2" class="t" style="left:2374.8px;top:1097.2px;font-size:32.2px;color:#2b2b2b;font-weight:400;transform:scaleX(0.9354);transform-origin:0 0;">00:02:00</div>
<div style="position:absolute;left:2539.2px;top:1082.2px;width:151.5px;height:57.6px;background:#aff2c7;"></div>
<div id="lsc5_3" class="t" style="left:2554.4px;top:1095.0px;font-size:32.2px;color:#2b2b2b;font-weight:400;transform:scaleX(0.9354);transform-origin:0 0;">00:02:00</div>
<div style="position:absolute;left:2719.5px;top:1082.2px;width:149.7px;height:57.6px;background:#aff2c7;"></div>
<div id="lsc5_4" class="t" style="left:2733.8px;top:1095.0px;font-size:32.2px;color:#2b2b2b;font-weight:400;transform:scaleX(0.9354);transform-origin:0 0;">00:02:00</div>
<div style="position:absolute;left:2898.0px;top:1082.2px;width:151.7px;height:57.6px;background:#fa9191;"></div>
<div id="lsc5_5" class="t" style="left:2913.3px;top:1097.2px;font-size:32.2px;color:#2b2b2b;font-weight:400;transform:scaleX(0.9354);transform-origin:0 0;">00:02:00</div>
<div style="position:absolute;left:3078.2px;top:1082.2px;width:150.0px;height:57.6px;background:#aff2c7;"></div>
<div id="lsc5_6" class="t" style="left:3092.7px;top:1097.2px;font-size:32.2px;color:#2b2b2b;font-weight:400;transform:scaleX(0.9354);transform-origin:0 0;">00:02:00</div>
<div id="lsn6" class="t" style="left:650.4px;top:1157.5px;font-size:33.9px;color:#3a5d7b;font-weight:400;transform:scaleX(1.0070);transform-origin:0 0;-webkit-text-stroke:1.19px #3a5d7b;">WorkLink Synergy</div>
<svg style="position:absolute;left:1418.9px;top:1152.5px;" width="36.0" height="36.0" viewBox="0 0 36.0 36.0"><circle cx="18" cy="18" r="14.5" fill="none" stroke="#e5404a" stroke-width="2.6"/><path d="M11.7,11.7 L24.3,24.3 M24.3,11.7 L11.7,24.3" stroke="#e5404a" stroke-width="2.6" fill="none" stroke-linecap="round"/></svg>
<div id="lss6" class="t" style="left:1470.8px;top:1157.8px;font-size:33.5px;color:#444;font-weight:400;transform:scaleX(0.9716);transform-origin:0 0;">Failure</div>
<div id="lsa6" class="t" style="left:1734.9px;top:1157.3px;font-size:33.5px;color:#444;font-weight:400;transform:scaleX(0.9547);transform-origin:0 0;">00:02:00</div>
<div style="position:absolute;left:2002.0px;top:1150.2px;width:149.7px;height:57.6px;background:#fa9191;"></div>
<div id="lsc6_0" class="t" style="left:2016.3px;top:1165.2px;font-size:32.2px;color:#2b2b2b;font-weight:400;transform:scaleX(0.9354);transform-origin:0 0;">00:02:00</div>
<div style="position:absolute;left:2180.2px;top:1150.2px;width:152.0px;height:57.6px;background:#aff2c7;"></div>
<div id="lsc6_1" class="t" style="left:2195.7px;top:1165.2px;font-size:32.2px;color:#2b2b2b;font-weight:400;transform:scaleX(0.9354);transform-origin:0 0;">00:02:00</div>
<div style="position:absolute;left:2360.5px;top:1150.2px;width:149.7px;height:57.6px;background:#fa9191;"></div>
<div id="lsc6_2" class="t" style="left:2374.8px;top:1165.2px;font-size:32.2px;color:#2b2b2b;font-weight:400;transform:scaleX(0.9354);transform-origin:0 0;">00:02:00</div>
<div style="position:absolute;left:2539.2px;top:1150.2px;width:151.5px;height:57.6px;background:#aff2c7;"></div>
<div id="lsc6_3" class="t" style="left:2554.4px;top:1163.0px;font-size:32.2px;color:#2b2b2b;font-weight:400;transform:scaleX(0.9354);transform-origin:0 0;">00:02:00</div>
<div style="position:absolute;left:2719.5px;top:1150.2px;width:149.7px;height:57.6px;background:#aff2c7;"></div>
<div id="lsc6_4" class="t" style="left:2733.8px;top:1163.0px;font-size:32.2px;color:#2b2b2b;font-weight:400;transform:scaleX(0.9354);transform-origin:0 0;">00:02:00</div>
<div style="position:absolute;left:2898.0px;top:1150.2px;width:151.7px;height:57.6px;background:#aff2c7;"></div>
<div id="lsc6_5" class="t" style="left:2913.3px;top:1165.2px;font-size:32.2px;color:#2b2b2b;font-weight:400;transform:scaleX(0.9354);transform-origin:0 0;">00:02:00</div>
<div style="position:absolute;left:3078.2px;top:1150.2px;width:150.0px;height:57.6px;background:#aff2c7;"></div>
<div id="lsc6_6" class="t" style="left:3092.7px;top:1165.2px;font-size:32.2px;color:#2b2b2b;font-weight:400;transform:scaleX(0.9354);transform-origin:0 0;">00:02:00</div>
<svg style="position:absolute;left:0;top:0" width="3840" height="1300"><polyline points="3287.4,746.0 3331.8,777.5 3393.6,758.9 3465.0,750.4 3516.3,777.5 3584.2,785.2 3637.8,763.8" fill="none" stroke="#6e91a8" stroke-width="2.6" stroke-linejoin="round"/><circle cx="3637.8" cy="763.8" r="8" fill="#3f6583"/><polyline points="3283.4,836.0 3337.9,819.5 3391.6,855.4 3461.0,849.3 3517.5,832.8 3584.2,842.9 3637.8,847.7" fill="none" stroke="#6e91a8" stroke-width="2.6" stroke-linejoin="round"/><circle cx="3637.8" cy="847.7" r="8" fill="#3f6583"/><polyline points="3287.5,887.6 3332.0,919.9 3393.8,900.9 3465.8,893.1 3516.1,919.9 3583.7,927.6 3639.5,906.1" fill="none" stroke="#6e91a8" stroke-width="2.6" stroke-linejoin="round"/><circle cx="3639.5" cy="906.1" r="8" fill="#3f6583"/><polyline points="3287.5,969.6 3335.8,962.2 3463.6,978.7 3516.1,987.6 3583.2,995.8 3639.5,987.8" fill="none" stroke="#6e91a8" stroke-width="2.6" stroke-linejoin="round"/><circle cx="3639.5" cy="987.8" r="8" fill="#3f6583"/><polyline points="3285.0,1056.9 3331.1,1042.5 3396.0,1050.8 3510.0,1032.0 3577.4,1042.5 3639.5,1065.7" fill="none" stroke="#6e91a8" stroke-width="2.6" stroke-linejoin="round"/><circle cx="3639.5" cy="1065.7" r="8" fill="#3f6583"/><polyline points="3287.5,1105.7 3331.1,1116.2 3393.8,1105.7 3463.6,1116.2 3514.7,1105.7 3576.3,1116.2 3639.5,1116.2" fill="none" stroke="#6e91a8" stroke-width="2.6" stroke-linejoin="round"/><circle cx="3639.5" cy="1116.2" r="8" fill="#3f6583"/><polyline points="3287.5,1178.0 3333.0,1196.3 3393.8,1188.6 3463.6,1186.6 3517.5,1203.7 3576.9,1182.5 3639.5,1191.9" fill="none" stroke="#6e91a8" stroke-width="2.6" stroke-linejoin="round"/><circle cx="3639.5" cy="1191.9" r="8" fill="#3f6583"/></svg>
<div style="position:absolute;left:3706.3px;top:634.0px;width:13.5px;height:572.5px;background:#f7f7f7;border-radius:7px;"></div>
<div style="position:absolute;left:3706.3px;top:735.9px;width:13.5px;height:184.8px;background:#c9c9c9;border-radius:7px;"></div>
<div style="position:absolute;left:568.2px;top:1292.5px;width:3158.0px;height:758.1px;background:#ffffff;box-sizing:border-box;border:2px solid #e2dfdb;border-radius:10px;"></div>
<div id="jh_title" class="t" style="left:620.7px;top:1347.3px;font-size:39.8px;color:#1a1a1a;font-weight:400;transform:scaleX(1.0641);transform-origin:0 0;-webkit-text-stroke:1.11px #1a1a1a;">Job History</div>
<div id="jh_sj" class="t" style="left:2320.8px;top:1351.3px;font-size:29.8px;color:#444;font-weight:400;transform:scaleX(0.9445);transform-origin:0 0;">Select job</div>
<div style="position:absolute;left:2471.8px;top:1336.2px;width:348.2px;height:59.0px;background:#ffffff;box-sizing:border-box;border:3.8px solid #d7d7d7;border-radius:8px;"></div>
<div id="jh_all" class="t" style="left:2494.9px;top:1353.3px;font-size:24.5px;color:#444;font-weight:400;transform:scaleX(0.9140);transform-origin:0 0;">(All)</div>
<svg style="position:absolute;left:2776.0px;top:1358.0px;" width="26.0" height="18.0" viewBox="0 0 26.0 18.0"><path d="M4.8,4 L12.9,12.3 L21,4" stroke="#444" stroke-width="2.4" fill="none" stroke-linecap="round" stroke-linejoin="round"/></svg>
<div id="jh_sp" class="t" style="left:2952.4px;top:1351.3px;font-size:29.8px;color:#444;font-weight:400;transform:scaleX(0.9592);transform-origin:0 0;">Select Period</div>
<div style="position:absolute;left:3150.1px;top:1336.1px;width:239.8px;height:59.5px;background:#ffffff;box-sizing:border-box;border:3.8px solid #d7d7d7;border-radius:8px;"></div>
<div id="jh_From" class="t" style="left:3173.8px;top:1352.7px;font-size:25.0px;color:#6a6a6a;font-weight:400;transform:scaleX(0.9515);transform-origin:0 0;">From</div>
<svg style="position:absolute;left:3336.0px;top:1349.0px;" width="36.0" height="36.0" viewBox="0 0 36.0 36.0"><rect x="2" y="6.8" width="30.5" height="26.5" rx="3.5" fill="none" stroke="#d7d7d7" stroke-width="3.6"/><path d="M2,16 L32.5,16" stroke="#d7d7d7" stroke-width="3.6"/><path d="M9.7,2.8 L9.7,7 M24.8,2.8 L24.8,7" stroke="#d7d7d7" stroke-width="3.6" stroke-linecap="round"/></svg>
<div style="position:absolute;left:3430.2px;top:1336.1px;width:239.8px;height:59.5px;background:#ffffff;box-sizing:border-box;border:3.8px solid #d7d7d7;border-radius:8px;"></div>
<div id="jh_To" class="t" style="left:3453.9px;top:1352.7px;font-size:25.0px;color:#6a6a6a;font-weight:400;">To</div>
<svg style="position:absolute;left:3614.0px;top:1349.0px;" width="36.0" height="36.0" viewBox="0 0 36.0 36.0"><rect x="2" y="6.8" width="30.5" height="26.5" rx="3.5" fill="none" stroke="#d7d7d7" stroke-width="3.6"/><path d="M2,16 L32.5,16" stroke="#d7d7d7" stroke-width="3.6"/><path d="M9.7,2.8 L9.7,7 M24.8,2.8 L24.8,7" stroke="#d7d7d7" stroke-width="3.6" stroke-linecap="round"/></svg>
<div style="position:absolute;left:621.7px;top:1432.1px;width:3048.0px;height:3.9px;background:#e2dcea;"></div>
<div style="position:absolute;left:621.7px;top:1506.0px;width:3048.0px;height:3.9px;background:#e2dcea;"></div>
<div id="jhh0" class="t" style="left:651.0px;top:1457.6px;font-size:33.5px;color:#151515;font-weight:400;transform:scaleX(0.9493);transform-origin:0 0;-webkit-text-stroke:1.00px #151515;">Job Process</div>
<div id="jhh1" class="t" style="left:1425.1px;top:1457.6px;font-size:33.5px;color:#151515;font-weight:400;transform:scaleX(0.9663);transform-origin:0 0;-webkit-text-stroke:1.00px #151515;">Process ID</div>
<div id="jhh2" class="t" style="left:1694.1px;top:1457.6px;font-size:33.5px;color:#151515;font-weight:400;transform:scaleX(1.0376);transform-origin:0 0;-webkit-text-stroke:1.00px #151515;">Start Time</div>
<div id="jhh3" class="t" style="left:2093.3px;top:1457.6px;font-size:33.5px;color:#151515;font-weight:400;transform:scaleX(0.9886);transform-origin:0 0;-webkit-text-stroke:1.00px #151515;">End Time</div>
<div id="jhh4" class="t" style="left:2497.0px;top:1457.6px;font-size:33.5px;color:#151515;font-weight:400;transform:scaleX(1.0053);transform-origin:0 0;-webkit-text-stroke:1.00px #151515;">Last Time</div>
<div id="jhh5" class="t" style="left:2716.2px;top:1457.6px;font-size:33.5px;color:#151515;font-weight:400;transform:scaleX(1.0093);transform-origin:0 0;-webkit-text-stroke:1.00px #151515;">Average Time</div>
<div id="jhh6" class="t" style="left:3027.7px;top:1457.6px;font-size:33.5px;color:#151515;font-weight:400;transform:scaleX(1.0043);transform-origin:0 0;-webkit-text-stroke:1.00px #151515;">Average Runtime (%)</div>
<div id="jhh7" class="t" style="left:3428.0px;top:1457.6px;font-size:33.5px;color:#151515;font-weight:400;transform:scaleX(1.0149);transform-origin:0 0;-webkit-text-stroke:1.00px #151515;">Status</div>
<svg style="position:absolute;left:2996.0px;top:1456.0px;" width="20.0" height="30.0" viewBox="0 0 20.0 30.0"><path d="M10,3 L16,11 L4,11 Z M10,27 L16,19 L4,19 Z" fill="#111"/></svg>
<svg style="position:absolute;left:3558.0px;top:1464.0px;" width="26.0" height="20.0" viewBox="0 0 26.0 20.0"><path d="M4.6,5.5 L13.1,14 L21.6,5.5" stroke="#333" stroke-width="2.4" fill="none" stroke-linecap="round" stroke-linejoin="round"/></svg>
<div style="position:absolute;left:621.7px;top:1586.8px;width:3048.0px;height:69.0px;background:#fafafa;"></div>
<div style="position:absolute;left:621.7px;top:1726.8px;width:3048.0px;height:68.9px;background:#fafafa;"></div>
<div style="position:absolute;left:621.7px;top:1866.6px;width:3048.0px;height:69.2px;background:#fafafa;"></div>
<div style="position:absolute;left:621.7px;top:1584.8px;width:3048.0px;height:2.0px;background:#e6e2ec;"></div>
<div style="position:absolute;left:621.7px;top:1654.8px;width:3048.0px;height:2.0px;background:#e6e2ec;"></div>
<div style="position:absolute;left:621.7px;top:1724.8px;width:3048.0px;height:2.0px;background:#e6e2ec;"></div>
<div style="position:absolute;left:621.7px;top:1794.7px;width:3048.0px;height:2.0px;background:#e6e2ec;"></div>
<div style="position:absolute;left:621.7px;top:1864.6px;width:3048.0px;height:2.0px;background:#e6e2ec;"></div>
<div style="position:absolute;left:621.7px;top:1934.8px;width:3048.0px;height:2.0px;background:#e6e2ec;"></div>
<div style="position:absolute;left:621.7px;top:2004.6px;width:3048.0px;height:2.0px;background:#e6e2ec;"></div>
<div id="jhn0" class="t" style="left:651.0px;top:1533.5px;font-size:33.5px;color:#444;font-weight:400;transform:scaleX(0.9879);transform-origin:0 0;">Human Capital Hub</div>
<div id="jhp0" class="t" style="left:1425.1px;top:1535.9px;font-size:33.5px;color:#444;font-weight:400;">112</div>
<div id="jhs0" class="t" style="left:1694.1px;top:1535.9px;font-size:33.5px;color:#444;font-weight:400;transform:scaleX(0.9747);transform-origin:0 0;">2023-11-21 16:30:00</div>
<div id="jhe0" class="t" style="left:2093.3px;top:1535.9px;font-size:33.5px;color:#444;font-weight:400;transform:scaleX(0.9747);transform-origin:0 0;">2023-11-21 17:03:57</div>
<div id="jhl0" class="t" style="left:2497.0px;top:1535.9px;font-size:33.5px;color:#444;font-weight:400;transform:scaleX(0.9509);transform-origin:0 0;">00:02:00</div>
<div id="jha0" class="t" style="left:2716.2px;top:1535.9px;font-size:33.5px;color:#444;font-weight:400;transform:scaleX(0.9509);transform-origin:0 0;">00:02:00</div>
<div style="position:absolute;left:2998.0px;top:1536.0px;width:119.0px;height:28.0px;background:#46708c;"></div>
<div id="jhpc0" class="t" style="left:3213.7px;top:1535.9px;font-size:33.5px;color:#444;font-weight:400;transform:scaleX(0.9200);transform-origin:0 0;">60%</div>
<svg style="position:absolute;left:3424.5px;top:1534.5px;" width="36.0" height="36.0" viewBox="0 0 36.0 36.0"><circle cx="18" cy="18" r="14.5" fill="none" stroke="#3ea25d" stroke-width="2.6"/><path d="M11.2,19.8 L16.2,23.4 L24.8,13.5" stroke="#3ea25d" stroke-width="2.6" fill="none" stroke-linecap="round" stroke-linejoin="round"/></svg>
<div id="jhst0" class="t" style="left:3476.2px;top:1535.9px;font-size:33.5px;color:#444;font-weight:400;transform:scaleX(0.9502);transform-origin:0 0;">Succeeded</div>
<div id="jhn1" class="t" style="left:651.0px;top:1601.5px;font-size:33.5px;color:#444;font-weight:400;transform:scaleX(0.9409);transform-origin:0 0;">EX Data Nexus</div>
<div id="jhp1" class="t" style="left:1425.1px;top:1605.9px;font-size:33.5px;color:#444;font-weight:400;">112</div>
<div id="jhs1" class="t" style="left:1694.1px;top:1605.9px;font-size:33.5px;color:#444;font-weight:400;transform:scaleX(0.9747);transform-origin:0 0;">2023-11-21 16:30:00</div>
<div id="jhe1" class="t" style="left:2093.3px;top:1605.9px;font-size:33.5px;color:#444;font-weight:400;transform:scaleX(0.9747);transform-origin:0 0;">2023-11-21 17:03:57</div>
<div id="jhl1" class="t" style="left:2497.0px;top:1605.9px;font-size:33.5px;color:#444;font-weight:400;transform:scaleX(0.9509);transform-origin:0 0;">00:04:06</div>
<div id="jha1" class="t" style="left:2716.2px;top:1605.9px;font-size:33.5px;color:#444;font-weight:400;transform:scaleX(0.9509);transform-origin:0 0;">00:04:06</div>
<div style="position:absolute;left:2998.0px;top:1606.0px;width:64.0px;height:28.0px;background:#46708c;"></div>
<div id="jhpc1" class="t" style="left:3213.7px;top:1605.9px;font-size:33.5px;color:#444;font-weight:400;transform:scaleX(0.9200);transform-origin:0 0;">34%</div>
<svg style="position:absolute;left:3424.5px;top:1604.5px;" width="36.0" height="36.0" viewBox="0 0 36.0 36.0"><circle cx="18" cy="18" r="14.5" fill="none" stroke="#e5404a" stroke-width="2.6"/><path d="M11.7,11.7 L24.3,24.3 M24.3,11.7 L11.7,24.3" stroke="#e5404a" stroke-width="2.6" fill="none" stroke-linecap="round"/></svg>
<div id="jhst1" class="t" style="left:3476.2px;top:1605.9px;font-size:33.5px;color:#444;font-weight:400;transform:scaleX(0.9716);transform-origin:0 0;">Failure</div>
<div id="jhn2" class="t" style="left:651.0px;top:1669.4px;font-size:33.5px;color:#444;font-weight:400;transform:scaleX(0.9686);transform-origin:0 0;">AscentLink Asia Ops</div>
<div id="jhp2" class="t" style="left:1425.1px;top:1675.9px;font-size:33.5px;color:#444;font-weight:400;">112</div>
<div id="jhs2" class="t" style="left:1694.1px;top:1675.9px;font-size:33.5px;color:#444;font-weight:400;transform:scaleX(0.9747);transform-origin:0 0;">2023-11-21 16:30:00</div>
<div id="jhe2" class="t" style="left:2093.3px;top:1675.9px;font-size:33.5px;color:#444;font-weight:400;transform:scaleX(0.9747);transform-origin:0 0;">2023-11-21 17:03:57</div>
<div id="jhl2" class="t" style="left:2497.0px;top:1675.9px;font-size:33.5px;color:#444;font-weight:400;transform:scaleX(0.9509);transform-origin:0 0;">00:03:12</div>
<div id="jha2" class="t" style="left:2716.2px;top:1675.9px;font-size:33.5px;color:#444;font-weight:400;transform:scaleX(0.9509);transform-origin:0 0;">00:03:12</div>
<div style="position:absolute;left:2998.0px;top:1676.0px;width:138.0px;height:28.0px;background:#46708c;"></div>
<div id="jhpc2" class="t" style="left:3213.7px;top:1675.9px;font-size:33.5px;color:#444;font-weight:400;transform:scaleX(0.9200);transform-origin:0 0;">67%</div>
<svg style="position:absolute;left:3424.5px;top:1674.5px;" width="36.0" height="36.0" viewBox="0 0 36.0 36.0"><circle cx="18" cy="18" r="14.5" fill="none" stroke="#3ea25d" stroke-width="2.6"/><path d="M11.2,19.8 L16.2,23.4 L24.8,13.5" stroke="#3ea25d" stroke-width="2.6" fill="none" stroke-linecap="round" stroke-linejoin="round"/></svg>
<div id="jhst2" class="t" style="left:3476.2px;top:1675.9px;font-size:33.5px;color:#444;font-weight:400;transform:scaleX(0.9502);transform-origin:0 0;">Succeeded</div>
<div id="jhn3" class="t" style="left:651.0px;top:1737.4px;font-size:33.5px;color:#444;font-weight:400;transform:scaleX(0.9757);transform-origin:0 0;">AscentLink Europe Ops</div>
<div id="jhp3" class="t" style="left:1425.1px;top:1745.9px;font-size:33.5px;color:#444;font-weight:400;">112</div>
<div id="jhs3" class="t" style="left:1694.1px;top:1745.9px;font-size:33.5px;color:#444;font-weight:400;transform:scaleX(0.9747);transform-origin:0 0;">2023-11-21 16:30:00</div>
<div id="jhe3" class="t" style="left:2093.3px;top:1745.9px;font-size:33.5px;color:#444;font-weight:400;transform:scaleX(0.9747);transform-origin:0 0;">2023-11-21 17:03:57</div>
<div id="jhl3" class="t" style="left:2497.0px;top:1745.9px;font-size:33.5px;color:#444;font-weight:400;transform:scaleX(0.9509);transform-origin:0 0;">00:02:00</div>
<div id="jha3" class="t" style="left:2716.2px;top:1745.9px;font-size:33.5px;color:#444;font-weight:400;transform:scaleX(0.9509);transform-origin:0 0;">00:02:00</div>
<div style="position:absolute;left:2998.0px;top:1746.0px;width:162.0px;height:28.0px;background:#46708c;"></div>
<div id="jhpc3" class="t" style="left:3213.7px;top:1745.9px;font-size:33.5px;color:#444;font-weight:400;transform:scaleX(0.9200);transform-origin:0 0;">78%</div>
<svg style="position:absolute;left:3424.5px;top:1744.5px;" width="36.0" height="36.0" viewBox="0 0 36.0 36.0"><circle cx="18" cy="18" r="14.5" fill="none" stroke="#3ea25d" stroke-width="2.6"/><path d="M11.2,19.8 L16.2,23.4 L24.8,13.5" stroke="#3ea25d" stroke-width="2.6" fill="none" stroke-linecap="round" stroke-linejoin="round"/></svg>
<div id="jhst3" class="t" style="left:3476.2px;top:1745.9px;font-size:33.5px;color:#444;font-weight:400;transform:scaleX(0.9502);transform-origin:0 0;">Succeeded</div>
<div id="jhn4" class="t" style="left:651.0px;top:1805.3px;font-size:33.5px;color:#444;font-weight:400;transform:scaleX(0.9789);transform-origin:0 0;">Standalone Suite</div>
<div id="jhp4" class="t" style="left:1425.1px;top:1815.9px;font-size:33.5px;color:#444;font-weight:400;">112</div>
<div id="jhs4" class="t" style="left:1694.1px;top:1815.9px;font-size:33.5px;color:#444;font-weight:400;transform:scaleX(0.9747);transform-origin:0 0;">2023-11-21 16:30:00</div>
<div id="jhe4" class="t" style="left:2093.3px;top:1815.9px;font-size:33.5px;color:#444;font-weight:400;transform:scaleX(0.9747);transform-origin:0 0;">2023-11-21 17:03:57</div>
<div id="jhl4" class="t" style="left:2497.0px;top:1815.9px;font-size:33.5px;color:#444;font-weight:400;transform:scaleX(0.9509);transform-origin:0 0;">00:03:10</div>
<div id="jha4" class="t" style="left:2716.2px;top:1815.9px;font-size:33.5px;color:#444;font-weight:400;transform:scaleX(0.9509);transform-origin:0 0;">00:03:10</div>
<div style="position:absolute;left:2998.0px;top:1816.0px;width:193.0px;height:28.0px;background:#46708c;"></div>
<div id="jhpc4" class="t" style="left:3213.7px;top:1815.9px;font-size:33.5px;color:#444;font-weight:400;transform:scaleX(0.9200);transform-origin:0 0;">87%</div>
<svg style="position:absolute;left:3424.5px;top:1814.5px;" width="36.0" height="36.0" viewBox="0 0 36.0 36.0"><circle cx="18" cy="18" r="14.5" fill="none" stroke="#3ea25d" stroke-width="2.6"/><path d="M11.2,19.8 L16.2,23.4 L24.8,13.5" stroke="#3ea25d" stroke-width="2.6" fill="none" stroke-linecap="round" stroke-linejoin="round"/></svg>
<div id="jhst4" class="t" style="left:3476.2px;top:1815.9px;font-size:33.5px;color:#444;font-weight:400;transform:scaleX(0.9502);transform-origin:0 0;">Succeeded</div>
<div id="jhn5" class="t" style="left:651.0px;top:1873.3px;font-size:33.5px;color:#444;font-weight:400;transform:scaleX(0.9864);transform-origin:0 0;">Email &amp; ProductOps Center</div>
<div id="jhp5" class="t" style="left:1425.1px;top:1885.9px;font-size:33.5px;color:#444;font-weight:400;">112</div>
<div id="jhs5" class="t" style="left:1694.1px;top:1885.9px;font-size:33.5px;color:#444;font-weight:400;transform:scaleX(0.9747);transform-origin:0 0;">2023-11-21 16:30:00</div>
<div id="jhe5" class="t" style="left:2093.3px;top:1885.9px;font-size:33.5px;color:#444;font-weight:400;transform:scaleX(0.9747);transform-origin:0 0;">2023-11-21 17:03:57</div>
<div id="jhl5" class="t" style="left:2497.0px;top:1885.9px;font-size:33.5px;color:#444;font-weight:400;transform:scaleX(0.9509);transform-origin:0 0;">00:02:00</div>
<div id="jha5" class="t" style="left:2716.2px;top:1885.9px;font-size:33.5px;color:#444;font-weight:400;transform:scaleX(0.9509);transform-origin:0 0;">00:02:00</div>
<div style="position:absolute;left:2998.0px;top:1886.0px;width:202.0px;height:28.0px;background:#46708c;"></div>
<div id="jhpc5" class="t" style="left:3213.7px;top:1885.9px;font-size:33.5px;color:#444;font-weight:400;transform:scaleX(0.9200);transform-origin:0 0;">90%</div>
<svg style="position:absolute;left:3424.5px;top:1884.5px;" width="36.0" height="36.0" viewBox="0 0 36.0 36.0"><circle cx="18" cy="18" r="14.5" fill="none" stroke="#3ea25d" stroke-width="2.6"/><path d="M11.2,19.8 L16.2,23.4 L24.8,13.5" stroke="#3ea25d" stroke-width="2.6" fill="none" stroke-linecap="round" stroke-linejoin="round"/></svg>
<div id="jhst5" class="t" style="left:3476.2px;top:1885.9px;font-size:33.5px;color:#444;font-weight:400;transform:scaleX(0.9502);transform-origin:0 0;">Succeeded</div>
<div id="jhn6" class="t" style="left:651.0px;top:1941.2px;font-size:33.5px;color:#444;font-weight:400;transform:scaleX(0.9811);transform-origin:0 0;">CloudBridge Data Gateway</div>
<div id="jhp6" class="t" style="left:1425.1px;top:1955.9px;font-size:33.5px;color:#444;font-weight:400;">112</div>
<div id="jhs6" class="t" style="left:1694.1px;top:1955.9px;font-size:33.5px;color:#444;font-weight:400;transform:scaleX(0.9747);transform-origin:0 0;">2023-11-21 16:30:00</div>
<div id="jhe6" class="t" style="left:2093.3px;top:1955.9px;font-size:33.5px;color:#444;font-weight:400;transform:scaleX(0.9747);transform-origin:0 0;">2023-11-21 17:03:57</div>
<div id="jhl6" class="t" style="left:2497.0px;top:1955.9px;font-size:33.5px;color:#444;font-weight:400;transform:scaleX(0.9509);transform-origin:0 0;">00:02:00</div>
<div id="jha6" class="t" style="left:2716.2px;top:1955.9px;font-size:33.5px;color:#444;font-weight:400;transform:scaleX(0.9509);transform-origin:0 0;">00:02:00</div>
<div style="position:absolute;left:2998.0px;top:1956.0px;width:76.0px;height:28.0px;background:#46708c;"></div>
<div id="jhpc6" class="t" style="left:3213.7px;top:1955.9px;font-size:33.5px;color:#444;font-weight:400;transform:scaleX(0.9200);transform-origin:0 0;">45%</div>
<svg style="position:absolute;left:3424.5px;top:1954.5px;" width="36.0" height="36.0" viewBox="0 0 36.0 36.0"><circle cx="18" cy="18" r="14.5" fill="none" stroke="#e5404a" stroke-width="2.6"/><path d="M11.7,11.7 L24.3,24.3 M24.3,11.7 L11.7,24.3" stroke="#e5404a" stroke-width="2.6" fill="none" stroke-linecap="round"/></svg>
<div id="jhst6" class="t" style="left:3476.2px;top:1955.9px;font-size:33.5px;color:#444;font-weight:400;transform:scaleX(0.9716);transform-origin:0 0;">Failure</div>
<div style="position:absolute;left:3706.3px;top:1432.1px;width:13.5px;height:572.4px;background:#f7f7f7;border-radius:7px;"></div>
<div style="position:absolute;left:3706.3px;top:1534.0px;width:13.5px;height:184.5px;background:#c9c9c9;border-radius:7px;"></div>
</body></html>
